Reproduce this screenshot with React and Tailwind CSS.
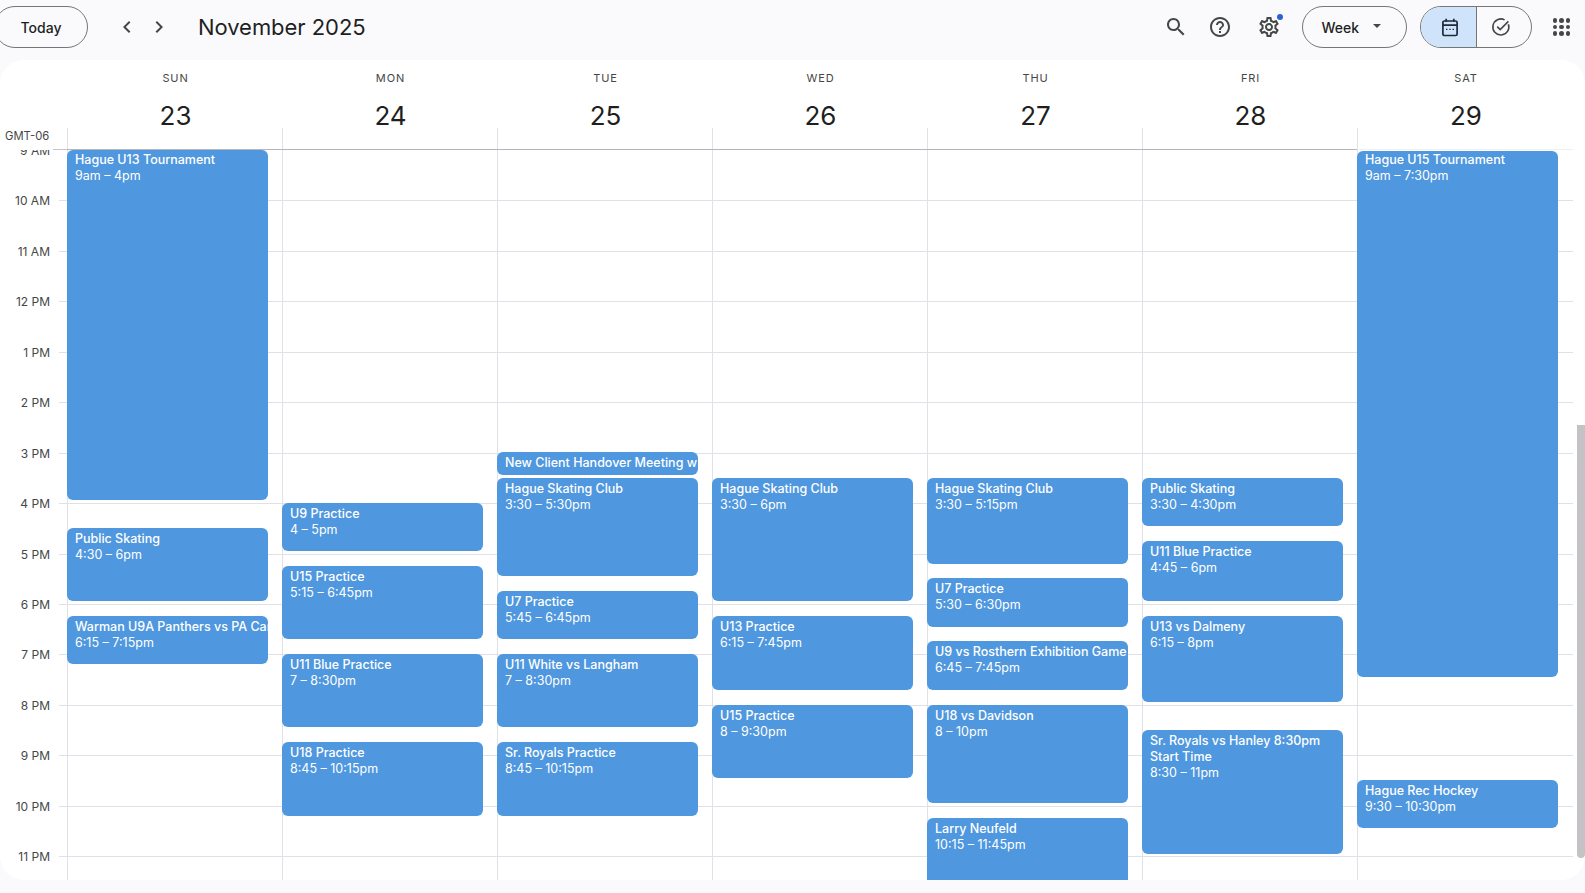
const H = 50.45;

const days = [
  { name: "SUN", num: 23, events: [
    { t: "Hague U13 Tournament", s: 9, e: 16, l: "9am – 4pm", first: "top" },
    { t: "Public Skating", s: 16.5, e: 18, l: "4:30 – 6pm" },
    { t: "Warman U9A Panthers vs PA Car", s: 18.25, e: 19.25, l: "6:15 – 7:15pm" },
  ]},
  { name: "MON", num: 24, events: [
    { t: "U9 Practice", s: 16, e: 17, l: "4 – 5pm" },
    { t: "U15 Practice", s: 17.25, e: 18.75, l: "5:15 – 6:45pm" },
    { t: "U11 Blue Practice", s: 19, e: 20.5, l: "7 – 8:30pm" },
    { t: "U18 Practice", s: 20.75, e: 22.25, l: "8:45 – 10:15pm" },
  ]},
  { name: "TUE", num: 25, events: [
    { t: "New Client Handover Meeting w", s: 15, e: 15.5 },
    { t: "Hague Skating Club", s: 15.5, e: 17.5, l: "3:30 – 5:30pm" },
    { t: "U7 Practice", s: 17.75, e: 18.75, l: "5:45 – 6:45pm" },
    { t: "U11 White vs Langham", s: 19, e: 20.5, l: "7 – 8:30pm" },
    { t: "Sr. Royals Practice", s: 20.75, e: 22.25, l: "8:45 – 10:15pm" },
  ]},
  { name: "WED", num: 26, events: [
    { t: "Hague Skating Club", s: 15.5, e: 18, l: "3:30 – 6pm" },
    { t: "U13 Practice", s: 18.25, e: 19.75, l: "6:15 – 7:45pm" },
    { t: "U15 Practice", s: 20, e: 21.5, l: "8 – 9:30pm" },
  ]},
  { name: "THU", num: 27, events: [
    { t: "Hague Skating Club", s: 15.5, e: 17.25, l: "3:30 – 5:15pm" },
    { t: "U7 Practice", s: 17.5, e: 18.5, l: "5:30 – 6:30pm" },
    { t: "U9 vs Rosthern Exhibition Game", s: 18.75, e: 19.75, l: "6:45 – 7:45pm" },
    { t: "U18 vs Davidson", s: 20, e: 22, l: "8 – 10pm" },
    { t: "Larry Neufeld", s: 22.25, e: 23.75, l: "10:15 – 11:45pm" },
  ]},
  { name: "FRI", num: 28, events: [
    { t: "Public Skating", s: 15.5, e: 16.5, l: "3:30 – 4:30pm" },
    { t: "U11 Blue Practice", s: 16.75, e: 18, l: "4:45 – 6pm" },
    { t: "U13 vs Dalmeny", s: 18.25, e: 20, l: "6:15 – 8pm" },
    { t: "Sr. Royals vs Hanley 8:30pm Start Time", s: 20.5, e: 23, l: "8:30 – 11pm", wrap: true },
  ]},
  { name: "SAT", num: 29, events: [
    { t: "Hague U15 Tournament", s: 9, e: 19.5, l: "9am – 7:30pm", first: "sat" },
    { t: "Hague Rec Hockey", s: 21.5, e: 22.5, l: "9:30 – 10:30pm" },
  ]},
];

const hours = ["9 AM","10 AM","11 AM","12 PM","1 PM","2 PM","3 PM","4 PM","5 PM","6 PM","7 PM","8 PM","9 PM","10 PM","11 PM"];

const Icon = ({ d, size = 24, className = "" }) => (
  <svg width={size} height={size} viewBox="0 0 24 24" fill="#444746" className={className}><path d={d} /></svg>
);

function Event({ ev }) {
  const shift = ev.first === "sat" ? 1 : 0;
  const top = (ev.s - 9) * H - 0.4 + shift;
  const height = (ev.e - ev.s) * H - 2.3 - shift;
  const pad = ev.first === "top" ? "pt-[2px]" : ev.first === "sat" ? "pt-[1px]" : "pt-[3px]";
  return (
    <div
      className={"absolute left-[-1px] w-[201px] rounded-[6px] bg-[#4f97de] text-white pl-[8px] text-[12.5px] leading-[16px] overflow-hidden " + pad}
      style={{ top, height }}
    >
      <div className={ev.wrap ? "font-medium pr-2" : "font-medium whitespace-nowrap"}>{ev.t}</div>
      {ev.l && <div className="whitespace-nowrap">{ev.l}</div>}
    </div>
  );
}

export default function App() {
  return (
    <div className="w-[1585px] h-[893px] overflow-hidden bg-[#fafafd] text-[#1f1f1f] flex flex-col" style={{ fontFamily: "Inter, 'Liberation Sans', sans-serif" }}>
      {/* Top bar */}
      <div className="h-[60px] shrink-0 flex items-center pb-[6px]">
        <button className="ml-[-6px] w-[94px] h-[42px] rounded-full border border-[#747775] text-[14px] font-medium flex items-center justify-center">Today</button>
        <div className="ml-[27px] flex items-center gap-[8px]">
          <Icon size={24} d="M15.41 7.41L14 6l-6 6 6 6 1.41-1.41L10.83 12z" />
          <Icon size={24} d="M10 6L8.59 7.41 13.17 12l-4.58 4.59L10 18l6-6z" />
        </div>
        <div className="ml-[27px] text-[22px] leading-[28px] tracking-[-0.05px]">November 2025</div>
        <div className="ml-auto flex items-center">
          <Icon size={24} className="mr-[20px]" d="M15.5 14h-.79l-.28-.27C15.41 12.59 16 11.11 16 9.5 16 5.91 13.09 3 9.5 3S3 5.91 3 9.5 5.91 16 9.5 16c1.61 0 3.09-.59 4.23-1.57l.27.28v.79l5 4.99L20.49 19l-4.99-5zm-6 0C7.01 14 5 11.99 5 9.5S7.01 5 9.5 5 14 7.01 14 9.5 11.99 14 9.5 14z" />
          <Icon size={24} className="mr-[25px]" d="M11 18h2v-2h-2v2zm1-16C6.48 2 2 6.48 2 12s4.48 10 10 10 10-4.48 10-10S17.52 2 12 2zm0 18c-4.41 0-8-3.59-8-8s3.59-8 8-8 8 3.59 8 8-3.59 8-8 8zm0-14c-2.21 0-4 1.79-4 4h2c0-1.1.9-2 2-2s2 .9 2 2c0 2-3 1.75-3 5h2c0-2.25 3-2.5 3-5 0-2.21-1.79-4-4-4z" />
          <div className="relative mr-[21px]">
            <Icon size={24} d="M19.43 12.98c.04-.32.07-.64.07-.98 0-.34-.03-.66-.07-.98l2.11-1.65c.19-.15.24-.42.12-.64l-2-3.46c-.09-.16-.26-.25-.44-.25-.06 0-.12.01-.17.03l-2.49 1c-.52-.4-1.08-.73-1.69-.98l-.38-2.65C14.46 2.18 14.25 2 14 2h-4c-.25 0-.46.18-.49.42l-.38 2.65c-.61.25-1.17.59-1.69.98l-2.49-1c-.06-.02-.12-.03-.18-.03-.17 0-.34.09-.43.25l-2 3.46c-.13.22-.07.49.12.64l2.11 1.65c-.04.32-.07.65-.07.98 0 .33.03.66.07.98l-2.11 1.65c-.19.15-.24.42-.12.64l2 3.46c.09.16.26.25.44.25.06 0 .12-.01.17-.03l2.49-1c.52.4 1.08.73 1.69.98l.38 2.65c.03.24.24.42.49.42h4c.25 0 .46-.18.49-.42l.38-2.65c.61-.25 1.17-.59 1.69-.98l2.49 1c.06.02.12.03.18.03.17 0 .34-.09.43-.25l2-3.46c.12-.22.07-.49-.12-.64l-2.11-1.65zm-1.98-1.71c.04.31.05.52.05.73 0 .21-.02.43-.05.73l-.14 1.13.89.7 1.08.84-.7 1.21-1.27-.51-1.04-.42-.9.68c-.43.32-.84.56-1.25.73l-1.06.43-.16 1.13-.2 1.35h-1.4l-.19-1.35-.16-1.13-1.06-.43c-.43-.18-.83-.41-1.23-.71l-.91-.7-1.06.43-1.27.51-.7-1.21 1.08-.84.89-.7-.14-1.13c-.03-.31-.05-.54-.05-.74s.02-.43.05-.73l.14-1.13-.89-.7-1.08-.84.7-1.21 1.27.51 1.04.42.9-.68c.43-.32.84-.56 1.25-.73l1.06-.43.16-1.13.2-1.35h1.39l.19 1.35.16 1.13 1.06.43c.43.18.83.41 1.23.71l.91.7 1.06-.43 1.27-.51.7 1.21-1.07.85-.89.7.14 1.13zM12 8c-2.21 0-4 1.79-4 4s1.79 4 4 4 4-1.79 4-4-1.79-4-4-4zm0 6c-1.1 0-2-.9-2-2s.9-2 2-2 2 .9 2 2-.9 2-2 2z" />
            <span className="absolute top-[-1px] right-[-2px] w-[6px] h-[6px] rounded-full bg-[#2f5fd8]" />
          </div>
          <button className="w-[105px] h-[42px] rounded-full border border-[#747775] text-[14px] font-medium flex items-center pl-[19px]">
            Week
            <svg width="8" height="4" viewBox="0 0 8 4" className="ml-[14px] mb-[2px]"><path d="M0 0h8L4 4z" fill="#444746" /></svg>
          </button>
          <div className="ml-[13px] w-[112px] h-[42px] rounded-full border border-[#747775] flex overflow-hidden">
            <div className="w-[56px] bg-[#cfe4fb] border-r border-[#747775] flex items-center justify-center pl-[4px]">
              <svg width="18" height="19" viewBox="0 0 18 19" fill="none" stroke="#1e2a3a" strokeWidth="1.7">
                <rect x="1.9" y="3" width="14.2" height="14.5" rx="1.6" />
                <path d="M2 7.2h14M5.2 0.8v3M12.8 0.8v3" />
                <path d="M5 11.4h1.4M8.3 11.4h1.4M11.6 11.4h1.4" strokeWidth="1.3" />
              </svg>
            </div>
            <div className="flex-1 flex items-center justify-center pr-[6px]">
              <svg width="20" height="20" viewBox="0 0 20 20" fill="none" stroke="#444746" strokeWidth="1.6">
                <path d="M17.4 7.3A8 8 0 1 1 13.6 2.9" />
                <path d="M6.2 9.6l3 3 8.2-8.2" />
              </svg>
            </div>
          </div>
          <div className="ml-[21px] mr-[15px] grid grid-cols-3 gap-[2px]">
            {Array.from({ length: 9 }).map((_, i) => (
              <span key={i} className="w-[4.5px] h-[4.5px] rounded-full bg-[#444746]" />
            ))}
          </div>
        </div>
      </div>

      {/* Card */}
      <div className="h-[820px] shrink-0 bg-white rounded-[24px] overflow-hidden relative flex flex-col">
        {/* Header */}
        <div className="h-[90px] shrink-0 flex">
          <div className="w-[67px] shrink-0 relative flex items-end pl-[5px] pb-[6px] text-[11.25px] leading-[16px] text-[#444746]">
            GMT-06
            <span className="absolute right-0 bottom-0 w-[14px] border-b border-[#c4c4ca]" />
          </div>
          {days.map((d, i) => (
            <div key={d.num} className={i === 6 ? "w-[216px] shrink-0 relative flex flex-col items-center pt-[10px] pl-[2px] border-b border-[#f0f0f3]" : "w-[215px] shrink-0 relative flex flex-col items-center pt-[10px] pl-[2px] border-b border-[#b4b4ba]"}>
              <div className="text-[11px] leading-[16px] tracking-[0.9px] text-[#444746]">{d.name}</div>
              <div className="mt-[10px] text-[26px] leading-[40px]">{d.num}</div>
              <span className="absolute left-0 top-[68px] bottom-0 border-l border-[#e0e0e8]" />
            </div>
          ))}
        </div>
        {/* Body */}
        <div className="h-[730px] overflow-hidden flex">
          <div className="w-[67px] shrink-0">
            {hours.map((h, i) => (
              <div key={h} className="h-[50.45px] relative flex justify-end">
                {i > 0 && <span className="w-[8px] h-0 border-t border-[#e0e0e8]" />}
                <span className="absolute right-[17px] top-[-7px] text-[12px] leading-[16px] text-[#444746]">{h}</span>
              </div>
            ))}
          </div>
          {days.map((d, n) => (
            <div key={d.num} className={n === 6 ? "w-[216px] shrink-0 relative border-l border-[#e0e0e8]" : "w-[215px] shrink-0 relative border-l border-[#e0e0e8]"}>
              {hours.map((h, i) => (
                <div key={h} className={i > 0 ? "h-[50.45px] border-t border-[#e0e0e8]" : "h-[50.45px]"} />
              ))}
              {d.events.map((ev) => <Event key={ev.t} ev={ev} />)}
            </div>
          ))}
        </div>
        {/* Scrollbar */}
        <div className="absolute right-0 top-[365px] w-[8px] h-[433px] rounded-b-[4px] bg-[#c4c2c4]" />
      </div>
    </div>
  );
}
